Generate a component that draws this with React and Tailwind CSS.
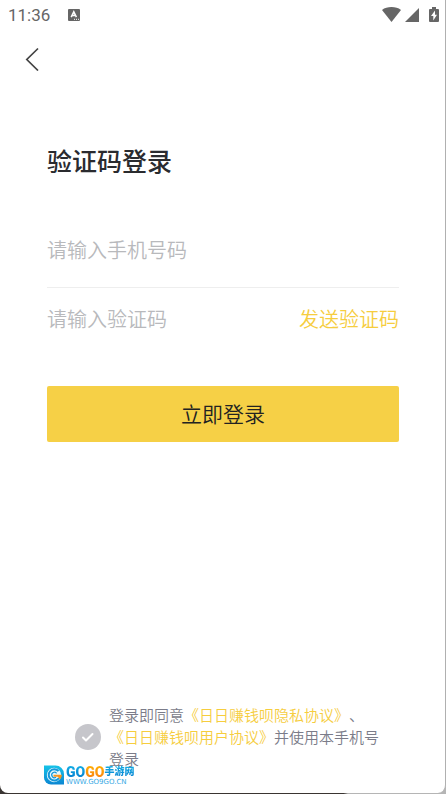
import { useState } from 'react';

function StatusBar() {
  return (
    <div className="flex h-[30px] items-center justify-between pr-1 pl-2 text-[#666]">
      <div className="flex items-center gap-[18px]">
        <span className="font-['Roboto',sans-serif] text-[17px] leading-[30px]">11:36</span>
        <svg className="h-3 w-3" viewBox="0 0 12 12">
          <rect width="12" height="12" rx="1" fill="currentColor" />
          <path d="M3.2 8.2 5.8 2.8 8.4 8.2M4.2 6.4h3.2" fill="none" stroke="#fff" strokeWidth="1.5" />
          <path d="M6 10.3h1M8 10.3h1M10 10.3h1" stroke="#fff" strokeWidth="1" />
        </svg>
      </div>
      <div className="flex items-center gap-1">
        <svg className="h-4 w-5" viewBox="0 0 20 16" fill="currentColor">
          <path d="M10.500 15 1 3C3.700 .8 6.800 0 10.500 0s6.800 .8 9.500 3z" />
        </svg>
        <svg className="h-4 w-4" viewBox="0 0 16 16" fill="currentColor">
          <path d="M0 15 14 1v14z" />
        </svg>
        <svg className="ml-1 h-4 w-3" viewBox="0 0 12 16" fill="currentColor">
          <path d="M3 0h4v2h2q1 0 1 1v11q0 1-1 1H1q-1 0-1-1V3q0-1 1-1h2z" />
          <path d="M6 3.500 2 9h2.300v4.500L8 7.700H6z" fill="#fff" />
        </svg>
      </div>
    </div>
  );
}

function Watermark() {
  return (
    <div className="pointer-events-none absolute bottom-2 left-11 flex items-center gap-0.5">
      <svg className="h-5 w-5" viewBox="0 0 20 20">
        <defs>
          <linearGradient id="badge" x1="0" y1="0" x2="0" y2="1">
            <stop offset="0" stopColor="#16c3e8" />
            <stop offset="1" stopColor="#0a86d2" />
          </linearGradient>
        </defs>
        <path d="M0 .5h11.500A8.500 8.500 0 0 1 20 9v10.500H7A7 7 0 0 1 0 12.500z" fill="url(#badge)" />
        <circle cx="10" cy="10" r="7.200" fill="#e8f8fd" />
        <path d="M14.500 6.200A5.600 5.600 0 1 0 15 13" fill="none" stroke="#1597da" strokeWidth="2" />
        <path d="M12.600 8.300A2.700 2.700 0 1 0 12 12.200" fill="none" stroke="#1597da" strokeWidth="1.200" />
        <path d="M9.500 9.800h8.300c0 2-.6 3.300-1.800 4.600l-2.200-2.600H9.500z" fill="#f79420" />
      </svg>
      <div className="flex flex-col">
        <div className="flex items-center font-['Liberation_Sans_Narrow','Roboto','Noto_Sans_CJK_SC',sans-serif] leading-4 font-black">
          <span className="bg-linear-to-b from-[#16b4e8] to-[#0a78cc] bg-clip-text text-[14px] text-transparent">GO</span>
          <span className="bg-linear-to-b from-[#ffb400] to-[#f87c12] bg-clip-text text-[14px] text-transparent">GO</span>
          <span className="bg-linear-to-b from-[#16b4e8] to-[#0a78cc] bg-clip-text text-[10px] text-transparent">手游网</span>
        </div>
        <span className="font-['DejaVu_Sans',sans-serif] text-[7px] leading-[5px] text-[#38a9e4]">WWW.GO9GO.CN</span>
      </div>
    </div>
  );
}

export default function App() {
  const [phone, setPhone] = useState('');
  const [code, setCode] = useState('');
  const [agreed, setAgreed] = useState(true);

  return (
    <div className="flex min-h-screen flex-col bg-linear-to-r from-[#3a3532] from-77% to-[#b5b5b5] to-78% pb-px font-['Noto_Sans_CJK_SC',sans-serif]">
      <div className="relative flex grow flex-col rounded-b-lg border-r border-[#b0b0b0] bg-white">
        <StatusBar />
        <header className="px-5 pt-[17px]">
          <button type="button" aria-label="返回" className="flex h-6 w-6 items-center justify-center text-[#444]">
            <svg className="h-6 w-6" viewBox="0 0 24 24" fill="none" stroke="currentColor" strokeWidth="1.700">
              <path d="M18 1.500 6.800 12.500 18 23.500" />
            </svg>
          </button>
        </header>

        <main className="flex flex-col pt-[71px] pr-[46px] pl-[47px]">
          <h1 className="text-[25px] leading-9 font-medium text-[#2a2b2f]">验证码登录</h1>

          <form onSubmit={(e) => e.preventDefault()} className="mt-[35px] flex flex-col">
            <div className="flex h-[75px] items-center border-b border-[#eee]">
              <input
                type="tel"
                aria-label="手机号码"
                placeholder="请输入手机号码"
                value={phone}
                onChange={(e) => setPhone(e.target.value)}
                className="w-full text-[20px] leading-8 font-[350] text-[#2a2b2f] outline-none placeholder:text-[#b8b9bc]"
              />
            </div>
            <div className="flex h-[62px] items-center justify-between">
              <input
                type="text"
                aria-label="验证码"
                placeholder="请输入验证码"
                value={code}
                onChange={(e) => setCode(e.target.value)}
                className="min-w-0 flex-1 text-[20px] leading-8 font-[350] text-[#2a2b2f] outline-none placeholder:text-[#b8b9bc]"
              />
              <button type="button" className="shrink-0 text-[20px] leading-8 font-[350] text-[#f6cd3e]">
                发送验证码
              </button>
            </div>
            <button type="submit" className="mt-9 h-14 rounded-xs bg-[#f6d046] text-[21px] font-[350] text-[#222]">
              立即登录
            </button>
          </form>
        </main>

        <footer className="mt-auto flex items-center gap-2 pr-[60px] pb-[23px] pl-[75px]">
          <span className="relative flex h-[26px] w-[26px] shrink-0">
            <input
              id="agree"
              type="checkbox"
              checked={agreed}
              onChange={(e) => setAgreed(e.target.checked)}
              className="peer h-full w-full appearance-none rounded-full bg-[#c6c6cb]"
            />
            <svg
              className="pointer-events-none absolute inset-0 hidden peer-checked:block"
              viewBox="0 0 26 26"
              fill="none"
              stroke="#fff"
              strokeWidth="2"
              strokeLinecap="round"
              strokeLinejoin="round"
            >
              <path d="m8 13.500 3 3 6.500-6.500" />
            </svg>
          </span>
          <label
            htmlFor="agree"
            className="text-[15px] leading-[22px] font-[350] text-[#7b7c89] [text-spacing-trim:space-all]"
          >
            登录即同意
            <a href="#privacy" className="text-[#f6cd3e]">《日日赚钱呗隐私协议》</a>
            、
            <a href="#terms" className="text-[#f6cd3e]">《日日赚钱呗用户协议》</a>
            并使用本手机号登录
          </label>
        </footer>
        <Watermark />
      </div>
    </div>
  );
}
